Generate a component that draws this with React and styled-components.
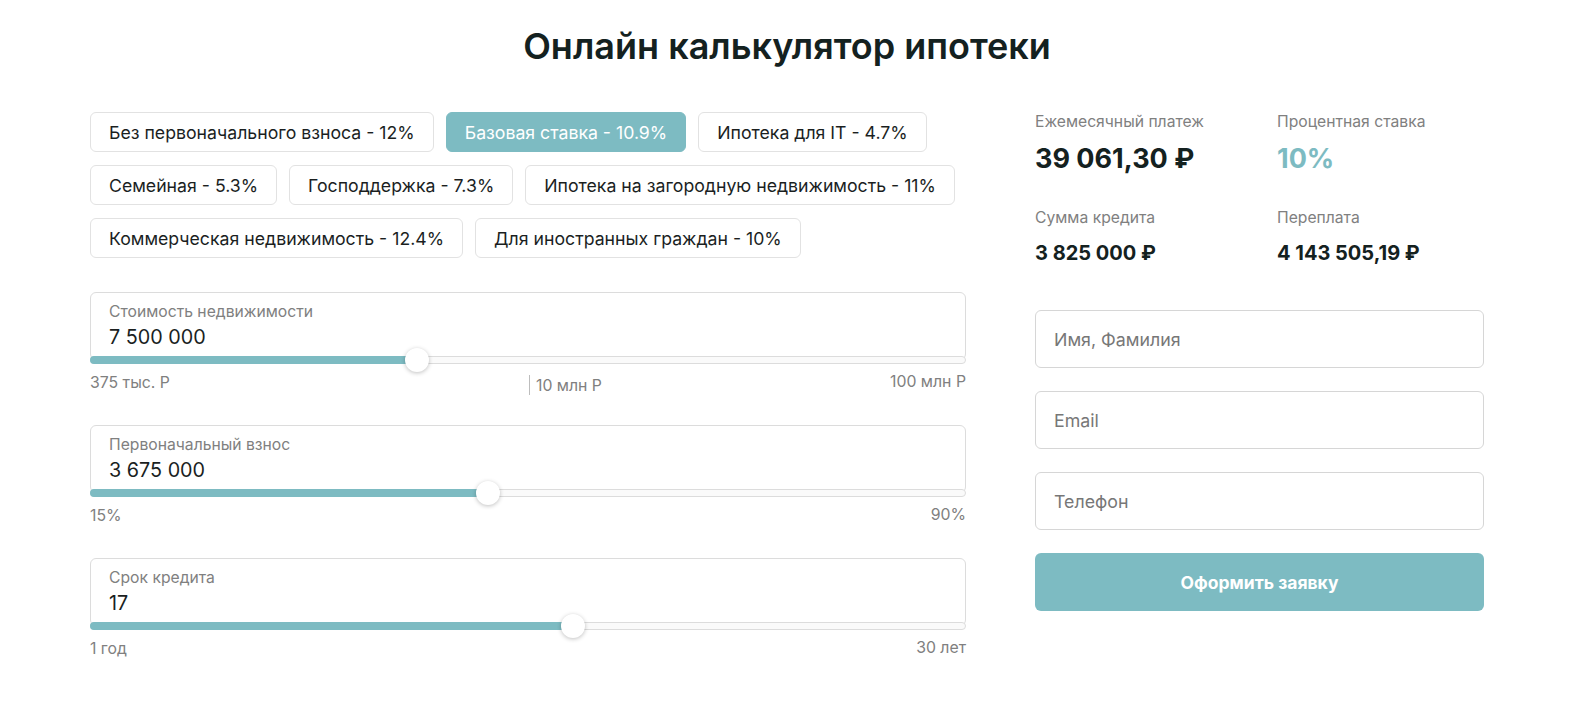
import React, { useState } from "react";
import styled, { createGlobalStyle } from "styled-components";

const TEAL = "#7dbbc2";

const GlobalStyle = createGlobalStyle`
  * { box-sizing: border-box; }
  body {
    margin: 0;
    background: #fff;
    font-family: Inter, "Noto Sans", sans-serif;
    color: #1b1f1f;
  }
`;

const programs = [
  "Без первоначального взноса - 12%",
  "Базовая ставка - 10.9%",
  "Ипотека для IT - 4.7%",
  "Семейная - 5.3%",
  "Господдержка - 7.3%",
  "Ипотека на загородную недвижимость - 11%",
  "Коммерческая недвижимость - 12.4%",
  "Для иностранных граждан - 10%",
];

const sliders = [
  {
    label: "Стоимость недвижимости",
    value: "7 500 000",
    pos: 0.373,
    min: "375 тыс. Р",
    mid: "10 млн Р",
    max: "100 млн Р",
  },
  { label: "Первоначальный взнос", value: "3 675 000", pos: 0.454, min: "15%", max: "90%" },
  { label: "Срок кредита", value: "17", pos: 0.552, min: "1 год", max: "30 лет" },
];

const App = () => {
  const [active, setActive] = useState(1);

  return (
    <>
      <GlobalStyle />
      <Wrapper>
        <Title>Онлайн калькулятор ипотеки</Title>
        <Columns>
          <Left>
            <Chips>
              {programs.map((p, i) => (
                <Chip key={p} $active={i === active} onClick={() => setActive(i)}>
                  {p}
                </Chip>
              ))}
            </Chips>

            {sliders.map((s) => (
              <SliderBlock key={s.label}>
                <Field>
                  <FieldLabel>{s.label}</FieldLabel>
                  <FieldValue>{s.value}</FieldValue>
                  <Track>
                    <Fill style={{ width: `${s.pos * 100}%` }} />
                    <Thumb style={{ left: `${s.pos * 100}%` }} />
                  </Track>
                </Field>
                {/* scale: left half holds min, right half holds mid + max */}
                <Scale>
                  <Half>
                    <span>{s.min}</span>
                  </Half>
                  <Half>
                    {s.mid ? <Mid>{s.mid}</Mid> : <span />}
                    <Max>{s.max}</Max>
                  </Half>
                </Scale>
              </SliderBlock>
            ))}
          </Left>

          <Right>
            <Stats>
              <Stat>
                <StatLabel>Ежемесячный платеж</StatLabel>
                <StatValue $big>39 061,30 ₽</StatValue>
              </Stat>
              <Stat>
                <StatLabel>Процентная ставка</StatLabel>
                <StatValue $big $accent>10%</StatValue>
              </Stat>
              <Stat>
                <StatLabel>Сумма кредита</StatLabel>
                <StatValue>3 825 000 ₽</StatValue>
              </Stat>
              <Stat>
                <StatLabel>Переплата</StatLabel>
                <StatValue>4 143 505,19 ₽</StatValue>
              </Stat>
            </Stats>

            <Form onSubmit={(e) => e.preventDefault()}>
              <Input type="text" placeholder="Имя, Фамилия" />
              <Input type="email" placeholder="Email" />
              <Input type="tel" placeholder="Телефон" />
              <Submit type="submit">Оформить заявку</Submit>
            </Form>
          </Right>
        </Columns>
      </Wrapper>
    </>
  );
};

const Wrapper = styled.main`
  width: 1394px;
  margin-left: 90px;
  padding-top: 24px;
`;

const Title = styled.h1`
  margin: 0;
  text-align: center;
  font-size: 36px;
  line-height: 44px;
  font-weight: 600;
  color: #142120;
`;

const Columns = styled.div`
  display: flex;
  gap: 69px;
  margin-top: 44px;
`;

const Left = styled.div`
  width: 876px;
`;

const Chips = styled.div`
  display: flex;
  flex-wrap: wrap;
  column-gap: 12px;
  row-gap: 13px;
  margin-bottom: 34px;
`;

const Chip = styled.button`
  height: 40px;
  padding: 0 18px;
  border-radius: 6px;
  border: 1px solid ${(p) => (p.$active ? TEAL : "#e2e2e2")};
  background: ${(p) => (p.$active ? TEAL : "#fff")};
  color: ${(p) => (p.$active ? "#fff" : "#1b1f1f")};
  font-family: inherit;
  font-size: 17.7px;
  cursor: pointer;
`;

const SliderBlock = styled.div`
  margin-bottom: 32px;
`;

const Field = styled.div`
  position: relative;
  height: 68px;
  padding: 9px 18px 0;
  border: 1px solid #dcdcdc;
  border-radius: 6px;
`;

const FieldLabel = styled.div`
  font-size: 15.7px;
  line-height: 20px;
  color: #808080;
`;

const FieldValue = styled.div`
  font-size: 19.8px;
  line-height: 30px;
  color: #1b1f1f;
`;

const Track = styled.div`
  position: absolute;
  left: -1px;
  right: -1px;
  bottom: -5px;
  height: 8px;
  border: 1px solid #dcdcdc;
  border-radius: 4px;
  background: #fafafa;
`;

const Fill = styled.div`
  position: absolute;
  left: -1px;
  top: -1px;
  bottom: -1px;
  background: ${TEAL};
  border-radius: 4px 0 0 4px;
`;

const Thumb = styled.div`
  position: absolute;
  top: 50%;
  width: 24px;
  height: 24px;
  margin: -12px 0 0 -12px;
  border-radius: 50%;
  background: #fff;
  box-shadow: 0 1px 4px rgba(0, 0, 0, 0.25);
`;

const Scale = styled.div`
  display: grid;
  grid-template-columns: 1fr 1fr;
  margin-top: 13px;
  height: 20px;
  font-size: 15.8px;
  line-height: 20px;
  color: #808080;
`;

const Half = styled.div`
  display: flex;
  justify-content: space-between;
  align-items: flex-start;
`;

const Mid = styled.span`
  margin-top: 2px;
  margin-left: 1px;
  padding: 2px 0 0 6px;
  border-left: 1px solid #bdbdbd;
  line-height: 18px;
`;

const Max = styled.span`
  margin-top: -1px;
`;

const Right = styled.aside`
  width: 449px;
`;

const Stats = styled.div`
  display: grid;
  grid-template-columns: 242px 1fr;
  row-gap: 32px;
`;

const Stat = styled.div`
  display: flex;
  flex-direction: column;
  gap: 10px;
`;

const StatLabel = styled.div`
  font-size: 15.7px;
  line-height: 20px;
  color: #808080;
`;

const StatValue = styled.div`
  font-size: ${(p) => (p.$big ? "27px" : "20px")};
  line-height: ${(p) => (p.$big ? "34px" : "30px")};
  font-weight: 700;
  color: ${(p) => (p.$accent ? TEAL : "#142120")};
`;

const Form = styled.form`
  display: flex;
  flex-direction: column;
  gap: 23px;
  margin-top: 42px;
`;

const Input = styled.input`
  height: 58px;
  padding: 0 18px;
  border: 1px solid #d6d6d6;
  border-radius: 6px;
  font-family: inherit;
  font-size: 17.8px;
  color: #1b1f1f;
  outline: none;
  &::placeholder {
    color: #777;
  }
`;

const Submit = styled.button`
  height: 58px;
  border: none;
  border-radius: 6px;
  background: ${TEAL};
  color: #fff;
  font-family: inherit;
  font-size: 17.5px;
  font-weight: 700;
  cursor: pointer;
`;

export default App;
